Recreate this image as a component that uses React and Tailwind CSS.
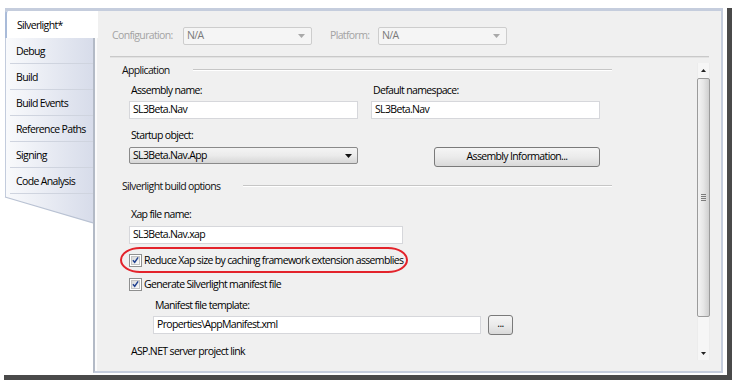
import React from "react";

function Arrow({ color = "#000", up = false }) {
  return (
    <svg width="7" height="4" viewBox="0 0 7 4">
      <path d={up ? "M0 4H7L3.5 0Z" : "M0 0H7L3.5 4Z"} fill={color} />
    </svg>
  );
}

function Dropdown({ className, value }) {
  return (
    <div className={`${className} h-[18px] border border-[#cdcdcd] bg-[#f5f5f5] rounded-[2px] flex items-center pl-[3px] pr-[6px]`}>
      <span className="flex-1 text-[#7a7a7a]">{value}</span>
      <Arrow color="#a9a9a9" />
    </div>
  );
}

function TextBox({ className, value }) {
  return (
    <div className={`${className} h-[18px] border border-[#d6d7db] bg-white flex items-center pl-[3px]`}>
      <span className="text-[#000]">{value}</span>
    </div>
  );
}

function Label({ children, className = "" }) {
  return <div className={`h-[16px] leading-[16px] pl-[2px] ${className}`}>{children}</div>;
}

function Checkbox() {
  return (
    <div className="w-[13px] h-[13px] border border-[#8e8f8f] bg-white p-[1px] shrink-0">
      <div className="w-full h-full border border-[#c4c4c4] bg-gradient-to-br from-[#d9d9d9] to-[#fbfbfb] flex items-center justify-center">
        <svg width="8" height="8" viewBox="0 0 8 8">
          <path d="M1 4.2 L3.1 6.6 L7 1" stroke="#1f3f8f" strokeWidth="1.6" fill="none" />
        </svg>
      </div>
    </div>
  );
}

function Heading({ children }) {
  return (
    <div className="h-[16px] w-[490px] flex items-center gap-[23px]">
      <span className="leading-[16px] text-[#111]">{children}</span>
      <div className="flex-1 h-0 border-t border-[#c6c6c6] border-b border-b-white" />
    </div>
  );
}

function Tab({ label }) {
  return (
    <div className="h-[26px] pl-[4px]">
      <div className="h-full border-b border-[#cfd4df] flex items-center pl-[6px]">
        <span className="leading-[16px]">{label}</span>
      </div>
    </div>
  );
}

function TabColumn() {
  return (
    <div className="w-[89px] flex flex-col shrink-0">
      <div className="ml-[1px] border-l border-[#c3ccdd] bg-gradient-to-r from-[#f9fafc] to-[#d7dcea]">
        <div className="relative z-10 -ml-px w-[93px] h-[27px] bg-white border-l-2 border-[#a9bbd9] rounded-tl-[3px] flex items-center pl-[10px]">
          <span className="leading-[16px]">Silverlight*</span>
        </div>
        <Tab label="Debug" />
        <Tab label="Build" />
        <Tab label="Build Events" />
        <Tab label="Reference Paths" />
        <Tab label="Signing" />
        <Tab label="Code Analysis" />
      </div>
      <svg width="89" height="30" viewBox="0 0 89 30" className="block">
        <defs>
          <linearGradient id="tg" x1="0" y1="0" x2="1" y2="0">
            <stop offset="0" stopColor="#f9fafc" />
            <stop offset="1" stopColor="#d7dcea" />
          </linearGradient>
        </defs>
        <polygon points="1,0 89,0 89,29 1,3" fill="url(#tg)" />
        <line x1="1.5" y1="0" x2="1.5" y2="3" stroke="#c3ccdd" />
        <line x1="1" y1="3" x2="89" y2="29" stroke="#b9c2d3" strokeWidth="1.2" />
      </svg>
    </div>
  );
}

function Scrollbar() {
  return (
    <div className="w-[13px] mr-[11px] mt-[1px] h-[297px] flex flex-col bg-[#f6f6f6] border-x border-[#ececec] shrink-0">
      <div className="h-[15px] flex items-center justify-center">
        <svg width="5" height="3" viewBox="0 0 5 3"><path d="M0 3H5L2.5 0Z" fill="#222" /></svg>
      </div>
      <div className="h-[239px] -mx-px border border-[#9b9b9b] rounded-[2px] bg-gradient-to-r from-[#f3f3f3] via-[#e6e6e6] to-[#cfcfcf] flex items-center justify-center">
        <div className="flex flex-col gap-[1px]">
          <div className="w-[5px] h-px bg-[#7c7c7c]" />
          <div className="w-[5px] h-px bg-[#7c7c7c]" />
          <div className="w-[5px] h-px bg-[#7c7c7c]" />
          <div className="w-[5px] h-px bg-[#7c7c7c]" />
        </div>
      </div>
      <div className="flex-1" />
      <div className="h-[14px] flex items-center justify-center">
        <svg width="5" height="3" viewBox="0 0 5 3"><path d="M0 0H5L2.5 3Z" fill="#222" /></svg>
      </div>
    </div>
  );
}

function Main() {
  return (
    <div className="flex-1 min-w-0 pl-[25px] flex flex-col overflow-hidden">
      <Heading>Application</Heading>
      <div className="pl-[7px] flex flex-col">
        <div className="flex gap-[13px] mt-[4px]">
          <div className="flex flex-col">
            <Label>Assembly name:</Label>
            <TextBox className="w-[229px] mt-[3px]" value="SL3Beta.Nav" />
          </div>
          <div className="flex flex-col">
            <Label>Default namespace:</Label>
            <TextBox className="w-[229px] mt-[3px]" value="SL3Beta.Nav" />
          </div>
        </div>
        <Label className="mt-[8px]">Startup object:</Label>
        <div className="mt-[4px] flex items-start">
          <div className="w-[229px] h-[17px] border border-[#8a8a8a] rounded-[2px] bg-gradient-to-b from-[#f4f4f4] via-[#ebebeb] to-[#d6d6d6] flex items-center pl-[3px] pr-[5px]">
            <span className="flex-1 text-[#000]">SL3Beta.Nav.App</span>
            <Arrow color="#111" />
          </div>
          <div className="ml-[76px] w-[166px] h-[20px] border border-[#7a7a7a] rounded-[3px] bg-gradient-to-b from-[#f5f5f5] via-[#ebebeb] to-[#d9d9d9] flex items-center justify-center text-[#000]">
            Assembly Information...
          </div>
        </div>
      </div>
      <div className="mt-[11px]">
        <Heading>Silverlight build options</Heading>
      </div>
      <div className="pl-[7px] flex flex-col">
        <Label className="mt-[12px]">Xap file name:</Label>
        <TextBox className="w-[274px] mt-[4px]" value="SL3Beta.Nav.xap" />
        <div className="relative mt-[8px] h-[16px] flex items-center gap-[2px]">
          <Checkbox />
          <span className="leading-[16px] text-[#000]">Reduce Xap size by caching framework extension assemblies</span>
          <div className="absolute left-[-9px] top-[-5px] w-[288px] h-[26px] border-2 border-[#e3232b] rounded-[20px/13px]" />
        </div>
        <div className="mt-[8px] h-[16px] flex items-center gap-[2px]">
          <Checkbox />
          <span className="leading-[16px] text-[#000]">Generate Silverlight manifest file</span>
        </div>
        <div className="pl-[24px] flex flex-col">
          <Label className="mt-[5px]">Manifest file template:</Label>
          <div className="mt-[2px] h-[20px] flex items-center">
            <TextBox className="w-[328px]" value="Properties\AppManifest.xml" />
            <div className="ml-[7px] w-[25px] h-[20px] border border-[#7a7a7a] rounded-[3px] bg-gradient-to-b from-[#f5f5f5] via-[#ebebeb] to-[#d9d9d9] flex items-center justify-center text-[#000] leading-none pb-[3px]">
              ...
            </div>
          </div>
        </div>
        <Label className="mt-[8px]">ASP.NET server project link</Label>
      </div>
    </div>
  );
}

function Content() {
  return (
    <div className="flex-1 min-w-0 flex border-l-2 border-[#b3bac6] border-r-2 border-r-[#c5cddd] border-b-2 border-b-[#c5cddd]">
      <div className="flex-1 min-w-0 border-l-2 border-[#fbfbfb] bg-[#f0f0f0] flex flex-col">
        <div className="mt-[16px] ml-[15px] h-[18px] flex items-center">
          <span className="w-[71px] text-[#a3a3a3]">Configuration:</span>
          <Dropdown className="w-[129px]" value="N/A" />
          <span className="ml-[18px] w-[48px] text-[#a3a3a3]">Platform:</span>
          <Dropdown className="w-[129px]" value="N/A" />
        </div>
        <div className="mt-[11px] ml-[13px] mr-[12px] h-0 border-t border-[#c9c9c9] border-b border-b-[#e2e2e2]" />
        <div className="flex flex-1 mt-[4px] min-h-0">
          <Main />
          <Scrollbar />
        </div>
      </div>
    </div>
  );
}

export default function App() {
  return (
    <div className="w-[732px] h-[380px] bg-white pl-[4px] pt-[8px] overflow-hidden font-['Open_Sans',sans-serif] text-[10.5px] tracking-[-0.65px] text-[#000]">
      <div className="w-[728px] h-[372px] border-r-[5px] border-b-[5px] border-[#4a4a4a] bg-white">
        <div className="w-[719px] h-[365px] flex flex-col">
          <div className="h-[3px] ml-[1px] bg-[#c5cddd] shrink-0" />
          <div className="flex flex-1 min-h-0">
            <TabColumn />
            <Content />
          </div>
        </div>
      </div>
    </div>
  );
}
